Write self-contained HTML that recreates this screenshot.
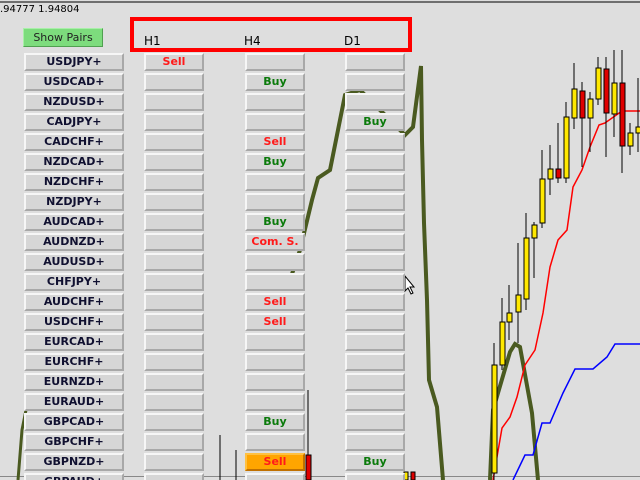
<!DOCTYPE html>
<html style="overflow:hidden;width:640px;height:480px"><head><style>
body{margin:0;width:640px;height:480px;overflow:hidden;background:#dedede;position:relative;font-family:"DejaVu Sans","Liberation Sans",sans-serif}
.b{position:absolute;height:14px;background:#d6d6d6;border-top:2px solid #f6f6f6;border-left:2px solid #f6f6f6;border-bottom:2px solid #a8a8a8;border-right:2px solid #a8a8a8;font-size:11px;font-weight:bold;text-align:center;line-height:14px;color:#101030;box-sizing:content-box}
.p{left:24px;width:96px}
.c1{left:144px;width:56px}.c2{left:245px;width:56px}.c3{left:345px;width:56px}
.s{color:#ff1a1a}.g{color:#0a7a0a}
svg{position:absolute;left:0;top:0}
</style></head><body>
<svg width="640" height="480">
<line x1="0" y1="2" x2="640" y2="2" stroke="#000" stroke-width="1"/>
<line x1="0" y1="476.5" x2="640" y2="476.5" stroke="#888" stroke-width="1"/>
<polyline fill="none" stroke="#4a5a20" stroke-width="4" points="290,280 300,250 312,200 318,178 330,170 338,130 345,95 360,90 405,135 413,127 421,66 422,140 424,223 427,300 429,380 437,407 443,480"/>
<polyline fill="none" stroke="#4a5a20" stroke-width="4" points="490,480 493,410 510,352 515,344 520,347 532,413 538,480"/>
<polyline fill="none" stroke="#4a5a20" stroke-width="3" points="18,480 22,430 26,410"/>
<polyline fill="none" stroke="#ff0000" stroke-width="1.5" points="493,480 502,428 510,417 517,397 525,365 535,350 543,313 550,267 558,240 567,230 573,187 582,170 590,147 599,125 605,123 622,111 640,111"/>
<polyline fill="none" stroke="#0000ff" stroke-width="1.5" points="513,480 525,455 533,455 542,423 550,423 563,393 575,369 593,369 607,357 615,344 640,344"/>
<g stroke="#000" stroke-width="1">
<line x1="494" y1="343" x2="494" y2="480"/><rect x="492" y="365" width="5" height="108" fill="#ffe800"/>
<line x1="502" y1="298" x2="502" y2="370"/><rect x="500" y="322" width="5" height="43" fill="#ffe800"/>
<line x1="509" y1="285" x2="509" y2="340"/><rect x="507" y="313" width="5" height="9" fill="#ffe800"/>
<line x1="518" y1="243" x2="518" y2="343"/><rect x="516" y="295" width="5" height="17" fill="#ffe800"/>
<line x1="526" y1="213" x2="526" y2="310"/><rect x="524" y="238" width="5" height="61" fill="#ffe800"/>
<line x1="534" y1="222" x2="534" y2="278"/><rect x="532" y="225" width="5" height="13" fill="#ffe800"/>
<line x1="542" y1="150" x2="542" y2="228"/><rect x="540" y="179" width="5" height="44" fill="#ffe800"/>
<line x1="550" y1="145" x2="550" y2="195"/><rect x="548" y="169" width="5" height="10" fill="#ffe800"/>
<line x1="558" y1="123" x2="558" y2="183"/><rect x="556" y="169" width="5" height="9" fill="#e00000"/>
<line x1="566" y1="102" x2="566" y2="183"/><rect x="564" y="117" width="5" height="61" fill="#ffe800"/>
<line x1="574" y1="63" x2="574" y2="129"/><rect x="572" y="89" width="5" height="29" fill="#ffe800"/>
<line x1="582" y1="82" x2="582" y2="167"/><rect x="580" y="91" width="5" height="27" fill="#e00000"/>
<line x1="590" y1="92" x2="590" y2="152"/><rect x="588" y="99" width="5" height="19" fill="#ffe800"/>
<line x1="598" y1="57" x2="598" y2="105"/><rect x="596" y="68" width="5" height="31" fill="#ffe800"/>
<line x1="606" y1="57" x2="606" y2="157"/><rect x="604" y="69" width="5" height="44" fill="#e00000"/>
<line x1="614" y1="50" x2="614" y2="137"/><rect x="612" y="83" width="5" height="31" fill="#ffe800"/>
<line x1="622" y1="50" x2="622" y2="173"/><rect x="620" y="83" width="5" height="63" fill="#e00000"/>
<line x1="630" y1="123" x2="630" y2="155"/><rect x="628" y="133" width="5" height="13" fill="#ffe800"/>
<line x1="638" y1="78" x2="638" y2="152"/><rect x="636" y="127" width="5" height="6" fill="#ffe800"/>
<line x1="308" y1="390" x2="308" y2="480"/><rect x="306" y="455" width="5" height="25" fill="#e00000"/>
<line x1="220" y1="435" x2="220" y2="480"/><line x1="236" y1="450" x2="236" y2="480"/>
<rect x="404" y="472" width="4" height="8" fill="#ffe800"/><rect x="411" y="472" width="4" height="8" fill="#e00000"/>
</g>
<polygon points="405,276 405,291 408,288 411,294 413,293 410,287 414,287" fill="#fff" stroke="#000" stroke-width="1"/>
</svg>
<div style="position:absolute;left:0;top:4px;font-size:10px;color:#000">.94777 1.94804</div>
<div style="position:absolute;left:130px;top:17px;width:274px;height:27px;border:4px solid #ff0000"></div>
<div style="position:absolute;left:144px;top:34px;font-size:12px">H1</div>
<div style="position:absolute;left:244px;top:34px;font-size:12px">H4</div>
<div style="position:absolute;left:344px;top:34px;font-size:12px">D1</div>
<div style="position:absolute;left:23px;top:28px;width:78px;height:17px;background:#7ddc7d;border:1px solid #a8f0a8;border-right-color:#50a050;border-bottom-color:#50a050;font-size:11px;text-align:center;line-height:17px;color:#222">Show Pairs</div>
<div class="b p" style="top:53px">USDJPY+</div>
<div class="b p" style="top:73px">USDCAD+</div>
<div class="b p" style="top:93px">NZDUSD+</div>
<div class="b p" style="top:113px">CADJPY+</div>
<div class="b p" style="top:133px">CADCHF+</div>
<div class="b p" style="top:153px">NZDCAD+</div>
<div class="b p" style="top:173px">NZDCHF+</div>
<div class="b p" style="top:193px">NZDJPY+</div>
<div class="b p" style="top:213px">AUDCAD+</div>
<div class="b p" style="top:233px">AUDNZD+</div>
<div class="b p" style="top:253px">AUDUSD+</div>
<div class="b p" style="top:273px">CHFJPY+</div>
<div class="b p" style="top:293px">AUDCHF+</div>
<div class="b p" style="top:313px">USDCHF+</div>
<div class="b p" style="top:333px">EURCAD+</div>
<div class="b p" style="top:353px">EURCHF+</div>
<div class="b p" style="top:373px">EURNZD+</div>
<div class="b p" style="top:393px">EURAUD+</div>
<div class="b p" style="top:413px">GBPCAD+</div>
<div class="b p" style="top:433px">GBPCHF+</div>
<div class="b p" style="top:453px">GBPNZD+</div>
<div class="b p" style="top:473px">GBPAUD+</div>

<div class="b c1 s" style="top:53px">Sell</div>
<div class="b c1" style="top:73px"></div><div class="b c1" style="top:93px"></div><div class="b c1" style="top:113px"></div><div class="b c1" style="top:133px"></div><div class="b c1" style="top:153px"></div><div class="b c1" style="top:173px"></div><div class="b c1" style="top:193px"></div><div class="b c1" style="top:213px"></div><div class="b c1" style="top:233px"></div><div class="b c1" style="top:253px"></div><div class="b c1" style="top:273px"></div><div class="b c1" style="top:293px"></div><div class="b c1" style="top:313px"></div><div class="b c1" style="top:333px"></div><div class="b c1" style="top:353px"></div><div class="b c1" style="top:373px"></div><div class="b c1" style="top:393px"></div><div class="b c1" style="top:413px"></div><div class="b c1" style="top:433px"></div><div class="b c1" style="top:453px"></div><div class="b c1" style="top:473px"></div>

<div class="b c2" style="top:53px"></div>
<div class="b c2 g" style="top:73px">Buy</div>
<div class="b c2" style="top:93px"></div><div class="b c2" style="top:113px"></div>
<div class="b c2 s" style="top:133px">Sell</div>
<div class="b c2 g" style="top:153px">Buy</div>
<div class="b c2" style="top:173px"></div><div class="b c2" style="top:193px"></div>
<div class="b c2 g" style="top:213px">Buy</div>
<div class="b c2 s" style="top:233px">Com. S.</div>
<div class="b c2" style="top:253px"></div><div class="b c2" style="top:273px"></div>
<div class="b c2 s" style="top:293px">Sell</div>
<div class="b c2 s" style="top:313px">Sell</div>
<div class="b c2" style="top:333px"></div><div class="b c2" style="top:353px"></div><div class="b c2" style="top:373px"></div><div class="b c2" style="top:393px"></div>
<div class="b c2 g" style="top:413px">Buy</div>
<div class="b c2" style="top:433px"></div>
<div class="b c2 s" style="top:453px;background:#ffa500;border-color:#ffc040 #c07000 #c07000 #ffc040">Sell</div>
<div class="b c2" style="top:473px"></div>

<div class="b c3" style="top:53px"></div><div class="b c3" style="top:73px"></div><div class="b c3" style="top:93px"></div>
<div class="b c3 g" style="top:113px">Buy</div>
<div class="b c3" style="top:133px"></div><div class="b c3" style="top:153px"></div><div class="b c3" style="top:173px"></div><div class="b c3" style="top:193px"></div><div class="b c3" style="top:213px"></div><div class="b c3" style="top:233px"></div><div class="b c3" style="top:253px"></div><div class="b c3" style="top:273px"></div><div class="b c3" style="top:293px"></div><div class="b c3" style="top:313px"></div><div class="b c3" style="top:333px"></div><div class="b c3" style="top:353px"></div><div class="b c3" style="top:373px"></div><div class="b c3" style="top:393px"></div><div class="b c3" style="top:413px"></div><div class="b c3" style="top:433px"></div>
<div class="b c3 g" style="top:453px">Buy</div>
<div class="b c3" style="top:473px"></div>
</body></html>
